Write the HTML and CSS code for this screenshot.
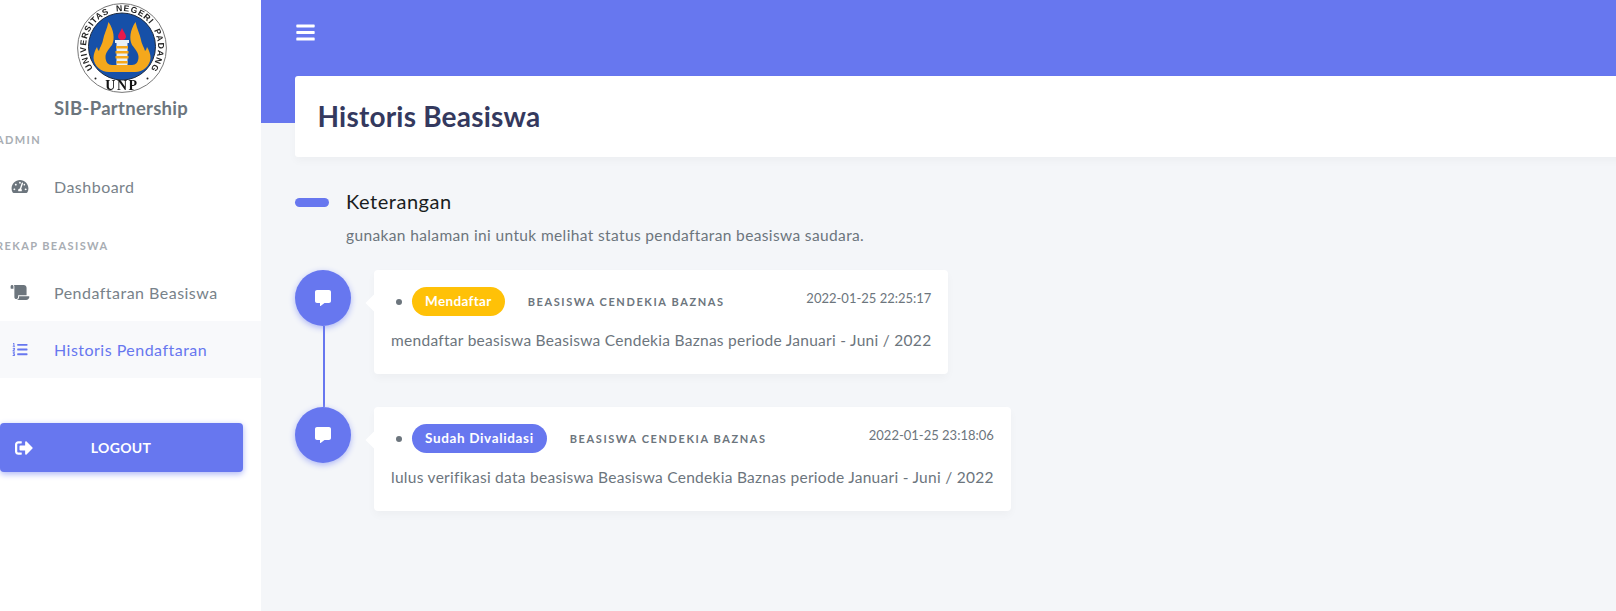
FILE: index.html
```html
<!DOCTYPE html>
<html lang="id">
<head>
<meta charset="utf-8">
<title>Historis Beasiswa</title>
<link rel="stylesheet" href="styles.css">
</head>
<body>
<div class="app">
  <aside class="sidebar">
    <div class="brand">
      <svg class="logo" viewBox="0 0 90 90" aria-label="Logo UNP">
        <defs>
          <path id="arcTop" d="M16 65.4A36 36 0 1 1 74 65.4"/>
        </defs>
        <circle cx="45" cy="45" r="44.4" fill="#fff" stroke="#777" stroke-width="1"/>
        <circle cx="45" cy="43.5" r="33.5" fill="#1650a8" stroke="#1d2a3f" stroke-width="1"/>
        <text class="logo-text" textLength="159"><textPath href="#arcTop">UNIVERSITAS&#160;&#160;NEGERI&#160;&#160;PADANG</textPath></text>
        <text class="logo-unp" x="45" y="87" text-anchor="middle">UNP</text>
        <circle cx="18.5" cy="75.5" r="1" fill="#222"/>
        <circle cx="70.5" cy="75.5" r="1" fill="#222"/>
        <path class="flame" d="M31.5 19C37 27 38 36 35 42C31 47 28.5 50 28.5 54C28.5 59 31 62 35 62L45 62L45 69L32 69C24 69 17 63 16.5 55C16.5 51 18 47 20 44C20.5 46 21 47 22 48C23 44 25 42 26 37C27 31 30 26 31.5 19Z"/>
        <path class="flame" transform="matrix(-1 0 0 1 90 0)" d="M31.5 19C37 27 38 36 35 42C31 47 28.5 50 28.5 54C28.5 59 31 62 35 62L45 62L45 69L32 69C24 69 17 63 16.5 55C16.5 51 18 47 20 44C20.5 46 21 47 22 48C23 44 25 42 26 37C27 31 30 26 31.5 19Z"/>
        <path fill="#e8f0f5" d="M38 37h14v3H38zM39.5 40h11v22h-11z"/>
        <path class="flame" d="M39 43h12v2.5H39zM38.5 48h13v2.5h-13zM38.5 53h13v2.5h-13zM39.5 58h11v2.5h-11z"/>
        <path fill="#e8194b" d="M45 25c1 3 4 6 4 8.500 0 2.500-2 3.500-4 3.500s-4-1-4-3.500c0-2.500 3-5.500 4-8.500z"/>
      </svg>
      <div class="brand-name">SIB-Partnership</div>
    </div>
    <div class="menu-head menu-head-admin">ADMIN</div>
    <a class="menu-item">
      <svg class="menu-icon" viewBox="0 0 576 512"><path d="M288 32C128.94 32 0 160.94 0 320c0 52.8 14.25 102.26 39.06 144.8 5.61 9.62 16.3 15.2 27.44 15.2h443c11.14 0 21.83-5.58 27.44-15.2C561.75 422.26 576 372.8 576 320c0-159.06-128.94-288-288-288zm0 64c14.71 0 26.58 10.13 30.32 23.65-1.11 2.26-2.64 4.23-3.45 6.67l-9.22 27.67c-5.13 3.49-10.97 6.01-17.64 6.01-17.67 0-32-14.33-32-32S270.33 96 288 96zM96 384c-17.67 0-32-14.33-32-32s14.33-32 32-32 32 14.33 32 32-14.33 32-32 32zm48-160c-17.67 0-32-14.33-32-32s14.33-32 32-32 32 14.33 32 32-14.33 32-32 32zm246.77-72.41l-61.33 184C343.13 347.33 352 364.54 352 384c0 11.72-3.38 22.55-8.88 32H232.88c-5.5-9.45-8.88-20.28-8.88-32 0-33.94 26.5-61.43 59.9-63.59l61.34-184.01c4.17-12.56 17.73-19.45 30.36-15.17 12.57 4.19 19.35 17.79 15.17 30.36zm14.66 57.2l15.52-46.55c3.47-1.29 7.13-2.23 11.05-2.23 17.67 0 32 14.33 32 32s-14.33 32-32 32c-11.38-.01-20.89-6.28-26.57-15.22zM480 384c-17.67 0-32-14.33-32-32s14.33-32 32-32 32 14.33 32 32-14.33 32-32 32z"/></svg>
      <span>Dashboard</span>
    </a>
    <div class="menu-head menu-head-rekap">REKAP BEASISWA</div>
    <a class="menu-item">
      <svg class="menu-icon" viewBox="0 0 640 512"><path d="M48 0C21.53 0 0 21.53 0 48v64c0 8.84 7.16 16 16 16h80V48C96 21.53 74.47 0 48 0zm208 412.57V352h288V96c0-52.94-43.06-96-96-96H111.59C121.74 13.41 128 29.92 128 48v368c0 38.87 34.65 69.65 74.75 63.12C234.22 474 256 444.46 256 412.57zM288 384v32c0 52.93-43.06 96-96 96h336c61.86 0 112-50.14 112-112 0-8.84-7.16-16-16-16H288z"/></svg>
      <span>Pendaftaran Beasiswa</span>
    </a>
    <a class="menu-item is-active">
      <svg class="menu-icon" viewBox="0 0 512 512"><path d="M61.77 401l17.5-20.15a19.92 19.92 0 0 0 5.07-14.19v-3.31C84.34 356 80.5 352 73 352H16a8 8 0 0 0-8 8v16a8 8 0 0 0 8 8h22.83a157.41 157.41 0 0 0-11 12.31l-5.61 7c-4 5.07-5.25 10.13-2.8 14.88l1.05 1.93c3 5.76 6.29 7.88 12.25 7.88h4.73c10.33 0 15.94 2.44 15.94 9.09 0 4.72-4.2 8.22-14.36 8.22a41.54 41.54 0 0 1-15.47-3.12c-6.49-3.88-11.74-3.5-15.6 3.12l-5.59 9.31c-3.72 6.13-3.19 11.72 2.63 15.94 7.71 4.69 20.38 9.44 37 9.44 34.16 0 48.5-22.75 48.5-44.12-.03-14.38-9.12-29.76-28.73-34.88zM496 224H176a16 16 0 0 0-16 16v32a16 16 0 0 0 16 16h320a16 16 0 0 0 16-16v-32a16 16 0 0 0-16-16zm0-160H176a16 16 0 0 0-16 16v32a16 16 0 0 0 16 16h320a16 16 0 0 0 16-16V80a16 16 0 0 0-16-16zm0 320H176a16 16 0 0 0-16 16v32a16 16 0 0 0 16 16h320a16 16 0 0 0 16-16v-32a16 16 0 0 0-16-16zM16 160h64a8 8 0 0 0 8-8v-16a8 8 0 0 0-8-8H64V40a8 8 0 0 0-8-8H32a8 8 0 0 0-7.14 4.42l-8 16A8 8 0 0 0 24 64h8v64H16a8 8 0 0 0-8 8v16a8 8 0 0 0 8 8zm-3.91 160H80a8 8 0 0 0 8-8v-16a8 8 0 0 0-8-8H41.32c3.29-10.29 48.34-18.68 48.34-56.44 0-29.06-25-39.56-44.47-39.56-21.36 0-33.8 10-40.46 18.75-4.37 5.59-3 10.84 2.8 15.37l8.58 6.88c5.61 4.56 11 2.47 16.12-2.44a13.44 13.44 0 0 1 9.46-3.84c3.33 0 9.28 1.56 9.28 8.75C51 248.19 0 257.31 0 304.59v4C0 316 5.08 320 12.09 320z"/></svg>
      <span>Historis Pendaftaran</span>
    </a>
    <a class="logout">
      <svg class="logout-icon" viewBox="0 0 512 512"><path d="M497 273L329 441c-15 15-41 4.5-41-17v-96H152c-13.3 0-24-10.7-24-24v-96c0-13.3 10.7-24 24-24h136V88c0-21.4 25.9-32 41-17l168 168c9.3 9.4 9.3 24.6 0 34zM192 436v-40c0-6.6-5.4-12-12-12H96c-17.7 0-32-14.3-32-32V160c0-17.7 14.3-32 32-32h84c6.6 0 12-5.4 12-12V76c0-6.6-5.4-12-12-12H96c-53 0-96 43-96 96v192c0 53 43 96 96 96h84c6.6 0 12-5.4 12-12z"/></svg>
      <span class="logout-label">LOGOUT</span>
    </a>
  </aside>

  <main class="main">
    <div class="topbar">
      <svg class="bars" viewBox="0 0 448 512"><path d="M16 132h416c8.837 0 16-7.163 16-16V76c0-8.837-7.163-16-16-16H16C7.163 60 0 67.163 0 76v40c0 8.837 7.163 16 16 16zm0 160h416c8.837 0 16-7.163 16-16v-40c0-8.837-7.163-16-16-16H16c-8.837 0-16 7.163-16 16v40c0 8.837 7.163 16 16 16zm0 160h416c8.837 0 16-7.163 16-16v-40c0-8.837-7.163-16-16-16H16c-8.837 0-16 7.163-16 16v40c0 8.837 7.163 16 16 16z"/></svg>
    </div>
    <header class="page-title"><h1>Historis Beasiswa</h1></header>

    <div class="note-head">
      <span class="note-pill"></span>
      <h2>Keterangan</h2>
    </div>
    <p class="note-text">gunakan halaman ini untuk melihat status pendaftaran beasiswa saudara.</p>

    <div class="timeline">
      <div class="tl-item">
        <div class="tl-rail">
          <div class="tl-dot"><svg viewBox="0 0 512 512"><path d="M448 0H64C28.7 0 0 28.7 0 64v288c0 35.3 28.7 64 64 64h96v84c0 9.8 11.2 15.5 19.1 9.7L304 416h144c35.3 0 64-28.7 64-64V64c0-35.3-28.7-64-64-64z"/></svg></div>
          <div class="tl-line"></div>
        </div>
        <div class="tl-space">
          <div class="tl-card">
            <div class="tl-head">
              <span class="tl-bullet"></span>
              <span class="badge badge-warning">Mendaftar</span>
              <span class="tl-title">Beasiswa Cendekia Baznas</span>
              <span class="tl-time">2022-01-25 22:25:17</span>
            </div>
            <p class="tl-body">mendaftar beasiswa Beasiswa Cendekia Baznas periode Januari - Juni / 2022</p>
          </div>
        </div>
      </div>
      <div class="tl-item">
        <div class="tl-rail">
          <div class="tl-dot"><svg viewBox="0 0 512 512"><path d="M448 0H64C28.7 0 0 28.7 0 64v288c0 35.3 28.7 64 64 64h96v84c0 9.8 11.2 15.5 19.1 9.7L304 416h144c35.3 0 64-28.7 64-64V64c0-35.3-28.7-64-64-64z"/></svg></div>
        </div>
        <div class="tl-space">
          <div class="tl-card">
            <div class="tl-head">
              <span class="tl-bullet"></span>
              <span class="badge badge-primary">Sudah Divalidasi</span>
              <span class="tl-title">Beasiswa Cendekia Baznas</span>
              <span class="tl-time">2022-01-25 23:18:06</span>
            </div>
            <p class="tl-body">lulus verifikasi data beasiswa Beasiswa Cendekia Baznas periode Januari - Juni / 2022</p>
          </div>
        </div>
      </div>
    </div>
  </main>
</div>
</body>
</html>
```

FILE: styles.css
```css
* { box-sizing: border-box; }
html, body { margin: 0; height: 100%; overflow: hidden; }
body {
  font-family: "Lato", "Open Sans", sans-serif;
  background: #f4f6f9;
  color: #6c757d;
}
h1, h2, p { margin: 0; }

.app { display: flex; min-height: 611px; }

/* Sidebar */
.sidebar {
  width: 261px;
  flex: none;
  background: #fff;
  height: 611px;
  overflow: hidden;
}
.brand { width: 243px; display: flex; flex-direction: column; align-items: center; padding-top: 3px; }
.logo { width: 90px; height: 90px; display: block; filter: blur(.4px); }
.logo-text { font: 700 8.6px "Liberation Sans", sans-serif; fill: #222; }
.logo-unp { font: 700 14px "Liberation Serif", serif; fill: #111; letter-spacing: 1.5px; }
.flame { fill: #f5a81c; }
.brand-name {
  font-size: 18.5px;
  font-weight: 700;
  color: #6c757d;
  line-height: 24px;
  margin-top: 3px;
  margin-left: -1px;
  letter-spacing: .28px;
}
.menu-head {
  font-size: 11px;
  font-weight: 700;
  color: #a8adb3;
  letter-spacing: 1.4px;
  line-height: 14px;
  margin-left: -4px;
}
.menu-head-admin { margin-top: 13px; }
.menu-head-rekap { margin-top: 24px; margin-bottom: 11px; }
.menu-item {
  display: flex;
  align-items: center;
  height: 57px;
  color: #78828a;
  font-size: 16px;
  letter-spacing: .48px;
}
.menu-head-admin + .menu-item { margin-top: 11px; }
.menu-icon { width: 20px; height: 15px; fill: #6c757d; margin-left: 9.500px; margin-right: 24.500px; flex: none; }
.is-active { background: #f8f9fb; color: #6777ef; }
.is-active .menu-icon { fill: #6777ef; }
.logout {
  display: flex;
  align-items: center;
  width: 243px;
  height: 49px;
  margin-top: 45px;
  background: #6777ef;
  border-radius: 4px;
  color: #fff;
  box-shadow: 0 2px 6px #acb5f6;
}
.logout-icon { width: 18px; height: 18px; fill: #fff; margin-left: 15px; flex: none; }
.logout-label { flex: 1; text-align: center; font-size: 14px; font-weight: 700; padding-right: 34px; letter-spacing: .3px; }

/* Main */
.main {
  flex: 1;
  min-width: 0;
  padding-left: 34px;
  background: linear-gradient(#6777ef 123px, #f4f6f9 123px);
  overflow: hidden;
}
.topbar { height: 76px; display: flex; align-items: flex-start; padding-top: 22px; }
.bars { width: 19px; height: 21px; fill: #fff; margin-left: 1px; }
.page-title {
  height: 81px;
  margin-right: -40px;
  background: #fff;
  border-radius: 3px;
  box-shadow: 0 4px 8px rgba(0,0,0,.03);
  display: flex;
  align-items: center;
  padding-left: 22.500px;
}
.page-title h1 { font-size: 28px; font-weight: 700; color: #34395e; letter-spacing: .2px; margin-bottom: 2px; }

.note-head { display: flex; align-items: center; margin-top: 33px; height: 24px; }
.note-pill { width: 34px; height: 9px; border-radius: 5px; background: #6777ef; margin-right: 17px; }
.note-head h2 { font-size: 20px; font-weight: 400; color: #191d21; letter-spacing: .53px; margin-bottom: 2px; }
.note-text { margin: 9px 0 0 51px; font-size: 15.500px; line-height: 24px; letter-spacing: .37px; }

/* Timeline */
.timeline { margin-top: 23px; }
.tl-item { display: flex; }
.tl-rail { width: 56px; flex: none; display: flex; flex-direction: column; align-items: center; }
.tl-dot {
  width: 56px;
  height: 56px;
  flex: none;
  border-radius: 50%;
  background: #6777ef;
  box-shadow: 0 2px 6px #acb5f6;
  display: flex;
  align-items: center;
  justify-content: center;
}
.tl-dot svg { width: 16px; height: 16px; fill: #fff; }
.tl-line { width: 2px; flex: 1; background: #6777ef; margin-left: 2px; }
.tl-space { margin-left: 23px; padding-bottom: 33px; }
.tl-card {
  position: relative;
  width: fit-content;
  height: 104px;
  padding: 17px;
  background: #fff;
  border-radius: 4px;
  box-shadow: 0 4px 8px rgba(0,0,0,.03);
}
.tl-card::before {
  content: "";
  position: absolute;
  left: -6px;
  top: 27px;
  width: 12px;
  height: 12px;
  background: #fff;
  transform: rotate(45deg);
}
.tl-head { display: flex; align-items: center; height: 29px; }
.tl-bullet { width: 6px; height: 6px; border-radius: 50%; background: #6c757d; margin: 0 10px 0 5px; flex: none; }
.badge {
  height: 29px;
  padding: 0 13px;
  border-radius: 15px;
  color: #fff;
  font-size: 13.500px;
  font-weight: 700;
  line-height: 29px;
  white-space: nowrap;
}
.badge-warning { background: #ffc107; letter-spacing: .35px; }
.badge-primary { background: #6777ef; letter-spacing: .65px; }
.tl-title {
  margin-left: 23px;
  font-size: 11px;
  font-weight: 700;
  letter-spacing: 1.6px;
  text-transform: uppercase;
  white-space: nowrap;
}
.tl-time { margin-left: auto; align-self: flex-start; font-size: 13px; line-height: 22px; letter-spacing: 0; white-space: nowrap; }
.tl-body { margin-top: 12px; font-size: 15.500px; line-height: 24px; letter-spacing: .28px; white-space: nowrap; }
```
